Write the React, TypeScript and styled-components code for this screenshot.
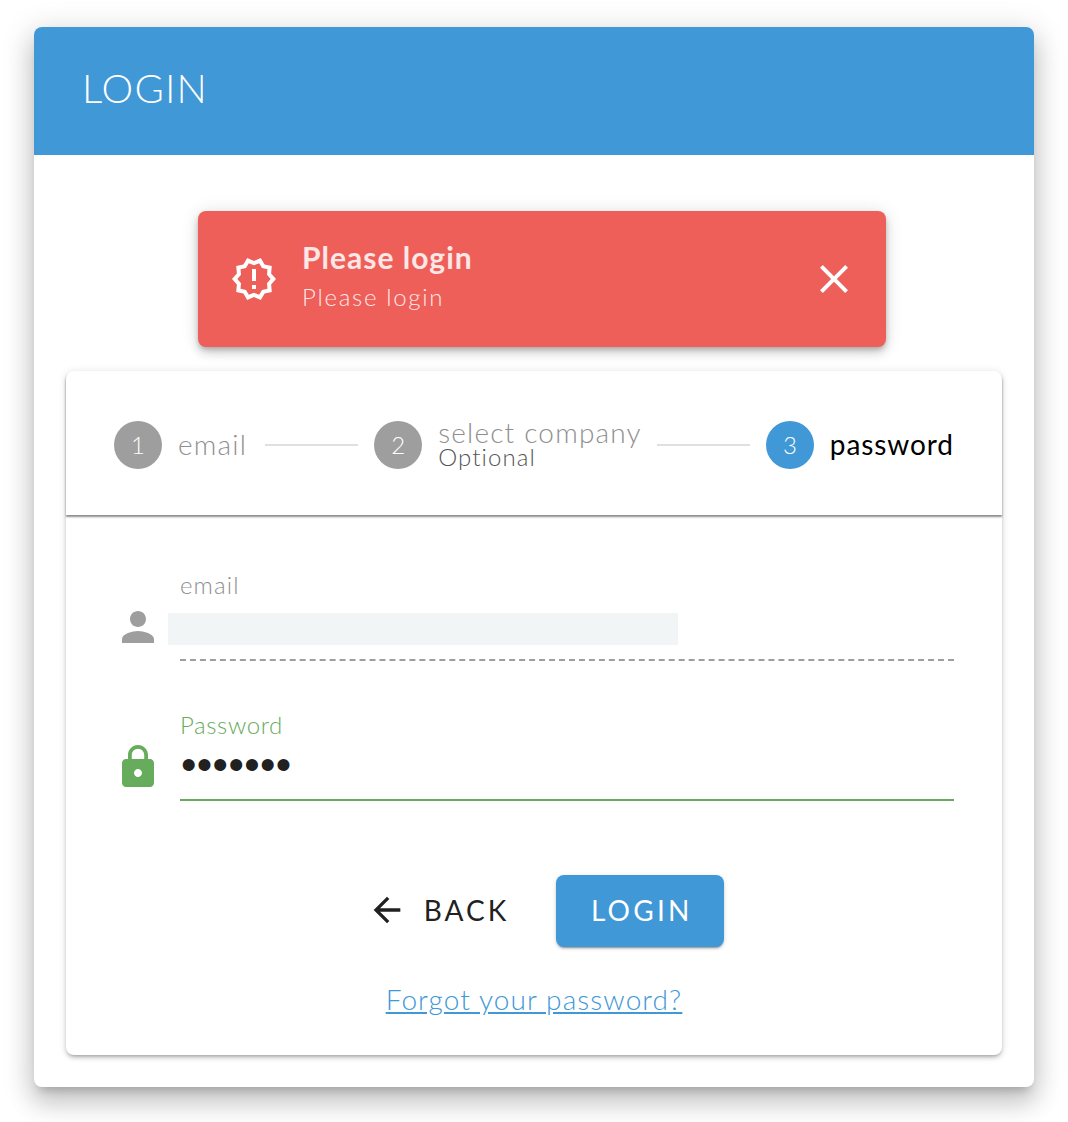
import React from "react";
import styled, {createGlobalStyle} from "styled-components";

const blue = "#4098d7";
const green = "#67ac5c";
const grey = "#9e9e9e";

const GlobalStyle = createGlobalStyle`
	html, body {
		margin: 0;
		background: #fff;
	}

	body {
		font-family: Lato, "Open Sans", sans-serif;
	}
`;

const Page = styled.div`
	padding: 27px 34px 35px;
`;

const Card = styled.div`
	background: #fff;
	border-radius: 8px;
	overflow: hidden;
	box-shadow: 0 16px 24px 2px rgba(0, 0, 0, 0.14), 0 6px 30px 5px rgba(0, 0, 0, 0.12), 0 8px 10px -5px rgba(0, 0, 0, 0.2);
`;

const Header = styled.header`
	height: 128px;
	padding: 0 0 6px 48px;
	box-sizing: border-box;
	display: flex;
	align-items: center;
	background: ${blue};
	color: #fff;
	font-size: 40px;
	font-weight: 300;
	letter-spacing: 1.1px;
`;

const Content = styled.div`
	padding: 56px 32px 32px;
	display: flex;
	flex-direction: column;
	align-items: center;
`;

const Alert = styled.div`
	width: 688px;
	height: 136px;
	margin: 0 0 24px 16px;
	padding: 0 28px 0 32px;
	box-sizing: border-box;
	display: flex;
	align-items: center;
	background: #ee5f59;
	border-radius: 8px;
	color: #fff;
	box-shadow: 0 6px 10px 0 rgba(0, 0, 0, 0.14), 0 1px 18px 0 rgba(0, 0, 0, 0.12), 0 3px 5px -1px rgba(0, 0, 0, 0.2);
`;

const AlertText = styled.div`
	flex: 1;
	margin: 0 0 6px 24px;
	display: flex;
	flex-direction: column;
`;

const AlertTitle = styled.div`
	font-size: 30px;
	line-height: 36px;
	font-weight: 700;
	letter-spacing: 1px;
	color: #fde7e6;
`;

const AlertBody = styled.div`
	margin-top: 6px;
	font-size: 24px;
	line-height: 32px;
	font-weight: 300;
	letter-spacing: 1.7px;
	color: #fde7e6;
`;

const Panel = styled.div`
	width: 100%;
	background: #fff;
	border-radius: 8px;
	box-shadow: 0 3px 3px -2px rgba(0, 0, 0, 0.2), 0 3px 4px 0 rgba(0, 0, 0, 0.14), 0 1px 8px 0 rgba(0, 0, 0, 0.12);
`;

const Stepper = styled.div`
	height: 144px;
	padding: 4px 0 0 48px;
	box-sizing: border-box;
	display: flex;
	align-items: center;
	border-radius: 8px 8px 0 0;
	box-shadow: 0 2px 2px 0 rgba(0, 0, 0, 0.45);
`;

const Step = styled.div`
	display: flex;
	align-items: center;
	gap: 16px;
`;

const StepNumber = styled.div<{$active?: boolean}>`
	width: 48px;
	height: 48px;
	padding-bottom: 2px;
	box-sizing: border-box;
	border-radius: 50%;
	display: flex;
	align-items: center;
	justify-content: center;
	background: ${(p) => (p.$active ? blue : grey)};
	color: #fff;
	font-size: 24px;
	font-weight: 300;
`;

const StepLabel = styled.div<{$active?: boolean}>`
	margin-top: -2px;
	font-size: 28px;
	line-height: 26px;
	font-weight: ${(p) => (p.$active ? 400 : 300)};
	letter-spacing: ${(p) => (p.$active ? "0.9px" : "1.2px")};
	color: ${(p) => (p.$active ? "#000" : "#8f8f8f")};
`;

const StepStack = styled.div`
	display: flex;
	flex-direction: column;
`;

const StepHint = styled.div`
	font-size: 24px;
	line-height: 24px;
	font-weight: 300;
	letter-spacing: 1.1px;
	color: #555;
`;

const Connector = styled.div<{$lead: number}>`
	flex: none;
	width: 93px;
	height: 2px;
	margin: 0 16px 0 ${(p) => p.$lead}px;
	background: #e0e0e0;
`;

const Form = styled.div`
	padding: 57px 48px 0;
	display: flex;
	flex-direction: column;
	gap: 51px;
`;

const Field = styled.div`
	height: 89px;
	display: flex;
	align-items: flex-end;
	gap: 18px;
`;

const FieldIcon = styled.svg<{$color: string}>`
	flex: none;
	width: 48px;
	height: 48px;
	margin-bottom: 10px;
	fill: ${(p) => p.$color};
`;

const FieldBody = styled.div<{$focused?: boolean}>`
	flex: 1;
	height: 89px;
	box-sizing: border-box;
	border-bottom: 2px ${(p) => (p.$focused ? `solid ${green}` : `dashed ${grey}`)};
`;

const FieldLabel = styled.label<{$focused?: boolean}>`
	display: block;
	height: 28px;
	margin-top: -1px;
	font-size: 24px;
	line-height: 28px;
	font-weight: 300;
	letter-spacing: ${(p) => (p.$focused ? "0.6px" : "1.1px")};
	color: ${(p) => (p.$focused ? green : "#8f8f8f")};
`;

const AutofillInput = styled.input`
	display: block;
	width: 510px;
	height: 32px;
	margin: 14px 0 0 -12px;
	padding: 0;
	border: 0;
	outline: 0;
	background: #f1f5f6;
`;

const PasswordInput = styled.input`
	display: block;
	width: 100%;
	height: 32px;
	margin-top: 10px;
	padding: 0 0 0 1px;
	border: 0;
	outline: 0;
	background: transparent;
	font-family: "Liberation Sans", sans-serif;
	font-size: 44px;
	letter-spacing: 0.4px;
	color: #212121;
`;

const Actions = styled.div`
	margin-top: 74px;
	display: flex;
	justify-content: center;
	gap: 16px;
`;

const BackButton = styled.button`
	height: 72px;
	padding: 0 31px 2px 23px;
	display: flex;
	align-items: center;
	gap: 17px;
	border: 0;
	background: transparent;
	font-family: inherit;
	font-size: 28px;
	letter-spacing: 3px;
	color: #212121;

	svg {
		width: 40px;
		height: 40px;
		fill: #212121;
	}
`;

const LoginButton = styled.button`
	width: 168px;
	height: 72px;
	padding: 0 0 2px 3px;
	border: 0;
	border-radius: 8px;
	background: ${blue};
	font-family: inherit;
	font-size: 28px;
	letter-spacing: 3.2px;
	color: #fff;
	box-shadow: 0 3px 1px -2px rgba(0, 0, 0, 0.2), 0 2px 2px 0 rgba(0, 0, 0, 0.14), 0 1px 5px 0 rgba(0, 0, 0, 0.12);
`;

const ForgotRow = styled.div`
	height: 108px;
	display: flex;
	justify-content: center;
	align-items: flex-start;
	padding-top: 34px;
	box-sizing: border-box;
`;

const ForgotLink = styled.a`
	font-size: 28px;
	line-height: 36px;
	font-weight: 300;
	letter-spacing: 1.1px;
	color: ${blue};
	text-decoration: underline;
`;

export default function App() {
	return (
		<Page>
			<GlobalStyle />
			<Card>
				<Header>LOGIN</Header>
				<Content>
					<Alert>
						<svg width="48" height="48" viewBox="0 0 24 24" fill="#fff">
							<path d="m23 12-2.44-2.78.34-3.68-3.61-.82-1.89-3.18L12 3 8.6 1.54 6.71 4.72l-3.61.81.34 3.68L1 12l2.44 2.78-.34 3.69 3.61.82 1.89 3.18L12 21l3.4 1.46 1.89-3.18 3.61-.82-.34-3.68L23 12zm-4.51 2.11.26 2.79-2.74.62-1.43 2.41L12 18.82l-2.58 1.11-1.43-2.41-2.74-.62.26-2.8L3.66 12l1.85-2.12-.26-2.78 2.74-.61 1.43-2.41L12 5.18l2.58-1.11 1.43 2.41 2.74.62-.26 2.79L20.34 12l-1.85 2.11zM11 15h2v2h-2zm0-8h2v6h-2z" />
						</svg>
						<AlertText>
							<AlertTitle>Please login</AlertTitle>
							<AlertBody>Please login</AlertBody>
						</AlertText>
						<svg width="48" height="48" viewBox="0 0 24 24" fill="#fff">
							<path d="M19 6.41 17.59 5 12 10.59 6.41 5 5 6.41 10.59 12 5 17.59 6.41 19 12 13.41 17.59 19 19 17.59 13.41 12z" />
						</svg>
					</Alert>
					<Panel>
						<Stepper>
							<Step>
								<StepNumber>1</StepNumber>
								<StepLabel>email</StepLabel>
							</Step>
							<Connector $lead={18} />
							<Step>
								<StepNumber>2</StepNumber>
								<StepStack>
									<StepLabel>select company</StepLabel>
									<StepHint>Optional</StepHint>
								</StepStack>
							</Step>
							<Connector $lead={15} />
							<Step>
								<StepNumber $active>3</StepNumber>
								<StepLabel $active>password</StepLabel>
							</Step>
						</Stepper>
						<Form>
							<Field>
								<FieldIcon $color={grey} viewBox="0 0 24 24">
									<path d="M12 12c2.21 0 4-1.79 4-4s-1.79-4-4-4-4 1.79-4 4 1.79 4 4 4zm0 2c-2.67 0-8 1.34-8 4v2h16v-2c0-2.66-5.33-4-8-4z" />
								</FieldIcon>
								<FieldBody>
									<FieldLabel>email</FieldLabel>
									<AutofillInput readOnly />
								</FieldBody>
							</Field>
							<Field>
								<FieldIcon $color={green} viewBox="0 0 24 24">
									<path d="M18 8h-1V6c0-2.76-2.24-5-5-5S7 3.24 7 6v2H6c-1.1 0-2 .9-2 2v10c0 1.1.9 2 2 2h12c1.1 0 2-.9 2-2V10c0-1.1-.9-2-2-2zm-6 9c-1.1 0-2-.9-2-2s.9-2 2-2 2 .9 2 2-.9 2-2 2zm3.1-9H8.9V6c0-1.71 1.39-3.1 3.1-3.1 1.71 0 3.1 1.39 3.1 3.1v2z" />
								</FieldIcon>
								<FieldBody $focused>
									<FieldLabel $focused>Password</FieldLabel>
									<PasswordInput type="password" value="1234567" readOnly />
								</FieldBody>
							</Field>
						</Form>
						<Actions>
							<BackButton>
								<svg viewBox="0 0 24 24">
									<path d="M20 11H7.83l5.59-5.59L12 4l-8 8 8 8 1.41-1.41L7.83 13H20v-2z" />
								</svg>
								BACK
							</BackButton>
							<LoginButton>LOGIN</LoginButton>
						</Actions>
						<ForgotRow>
							<ForgotLink href="#">Forgot your password?</ForgotLink>
						</ForgotRow>
					</Panel>
				</Content>
			</Card>
		</Page>
	);
}
